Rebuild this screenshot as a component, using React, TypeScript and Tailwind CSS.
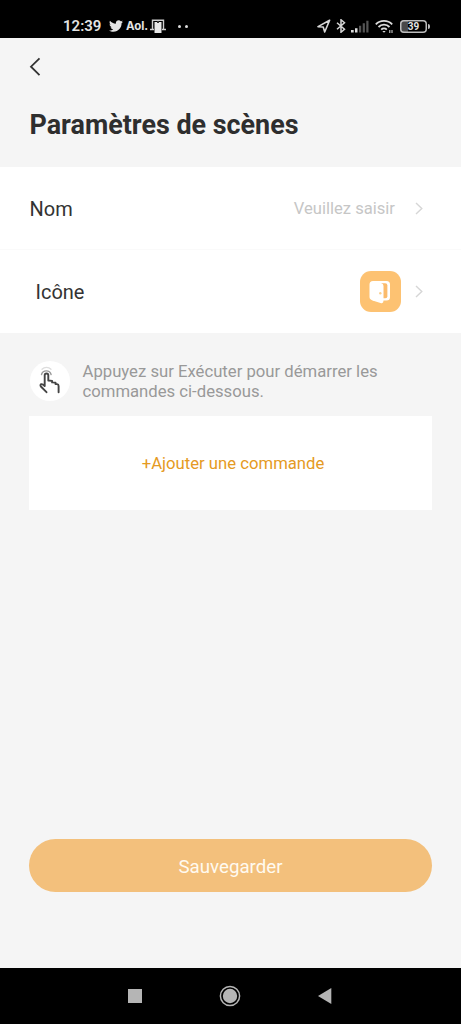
import type { ReactNode } from "react";
import { FaTwitter } from "react-icons/fa";

function StatusBar() {
  return (
    <div className="flex h-[38px] shrink-0 items-center bg-black pt-[14px] pr-[31px] pl-[63px] text-[#e4e4e4]">
      <span className="w-[39px] text-[15px] leading-6 font-semibold whitespace-nowrap">12:39</span>
      <FaTwitter className="ml-[7px] size-[14px] shrink-0" />
      <span className="ml-[3px] w-[23px] font-[Inter] text-[11.5px] leading-6 font-bold tracking-[-0.1px] whitespace-nowrap">
        Aol.
      </span>
      <svg className="ml-[1px] shrink-0" width="16" height="15" viewBox="0 0 16 15" fill="none">
        <path d="M2.5 10V1.2h11V10M0 10.500h4M12 10.500h4" stroke="#cfcfcf" strokeWidth="1.4" />
        <path d="M4.500 3h7v11h-7z" fill="#e8e8e8" />
        <path d="M7 2h2v2H7z" fill="#333" />
      </svg>
      <span className="ml-[12px] flex gap-[4px]">
        <i className="size-[3px] rounded-full bg-[#dcdcdc]" />
        <i className="size-[3px] rounded-full bg-[#dcdcdc]" />
      </span>

      <div className="ml-auto flex items-center">
        <svg width="14" height="14" viewBox="0 0 14 14" fill="none" stroke="#d6d6d6" strokeWidth="1.6" strokeLinejoin="round">
          <path d="M12.600 1.300 1 7.600l5.200.4 1.500 5z" />
        </svg>
        <svg className="ml-[5px]" width="10" height="14" viewBox="0 0 10 14" fill="none" stroke="#d6d6d6" strokeWidth="1.5">
          <path d="m1 3.800 7.500 6.400L5 13.200V.8l3.500 3L1 10.200" />
        </svg>
        <svg className="ml-[5px]" width="19" height="13" viewBox="0 0 19 13">
          <path d="M0 10h2.700v2.500H0zM4 8.200h2.500v4.300H4z" fill="#dedede" />
          <path d="M8 5.700h2.200v6.800H8zM11.700 3.200h2.200v9.300h-2.200zM15.300.8h2.200v11.700h-2.200z" fill="#555" />
        </svg>
        <svg className="ml-[5px]" width="19" height="15" viewBox="0 0 19 15" fill="none" stroke="#dcdcdc" strokeWidth="1.8">
          <path d="M.8 5.300a11.500 11.500 0 0 1 16.400 0M3.500 8a7.700 7.700 0 0 1 11 0M6.200 10.600a4 4 0 0 1 5.600 0" />
          <path d="M7.300 12 9 13.800l1.700-1.800z" fill="#dcdcdc" stroke="none" />
          <path d="M14.800 11v3M17 11v3" strokeWidth="1" />
        </svg>
        <div className="ml-[6px] flex h-[13px] w-[27px] items-center justify-center rounded-[4px] bg-linear-to-r from-[#484848] from-30% to-black to-30% pt-px text-[10px] leading-none font-bold ring-[1.500px] ring-[#bdbdbd] ring-inset">
          39
        </div>
        <i className="ml-px h-[5px] w-[2px] rounded-r bg-[#bdbdbd]" />
      </div>
    </div>
  );
}

function RowChevron() {
  return (
    <svg width="8" height="13" viewBox="0 0 8 13" fill="none" stroke="#d6d6d6" strokeWidth="1.400">
      <path d="m1 1 5.800 5.500L1 12" />
    </svg>
  );
}

function SettingRow({ label, children }: { label: ReactNode; children: ReactNode }) {
  return (
    <div className="flex h-[83px] items-center bg-white pr-[38px] pl-[29.500px] text-[20px] text-[#333]">
      {label}
      <div className="ml-auto flex items-center">
        {children}
        <RowChevron />
      </div>
    </div>
  );
}

function DoorIcon() {
  return (
    <div className="mr-[14px] size-[41px] rounded-[11px] bg-[#fdc272]">
      <svg width="41" height="41" viewBox="0 0 41 41">
        <path d="M13 10h13.500a3.500 3.500 0 0 1 3.500 3.500v12.500a3.500 3.500 0 0 1-3.500 3.500H13z" fill="#fff" />
        <path d="M19 12.200h6.200q2.200 0 2.200 2.200v10.800q0 2-2 2H22z" fill="#fbbb6c" />
        <path
          d="M13 10h3l5.500 2.300q2 .8 2 2.700v14.800q0 3.200-3 2.200l-8-2.600Q9.500 28.500 9.500 26V13.500Q9.500 10 13 10z"
          fill="#fff"
        />
        <circle cx="20.300" cy="22.300" r="1.200" fill="#fbd08f" />
      </svg>
    </div>
  );
}

function TapIcon() {
  return (
    <div className="size-[40px] shrink-0 rounded-full bg-white">
      <svg width="40" height="40" viewBox="0 0 40 40" fill="none" strokeLinejoin="round" strokeLinecap="round">
        <path d="M12 8.300a6.200 6.200 0 0 1 9 0" stroke="#ddd" strokeWidth="1.300" />
        <path d="M11.500 13.500a5 5 0 0 1 9.600 0" stroke="#999" strokeWidth="1.400" />
        <path
          d="m16.500 31.200-5.600-5.700q-1-1.600.3-2.300 1.200-.5 3.500 1.800V14.300a1.800 1.800 0 0 1 3.600 0v5.200l3.800.4v1.500l3.400.2v1.500h1.500q1.600.2 1.600 1.800v6.400"
          stroke="#444"
          strokeWidth="1.900"
        />
      </svg>
    </div>
  );
}

function NavBar() {
  return (
    <div className="flex h-[56px] shrink-0 items-center bg-black pl-[128px]">
      <i className="size-[14px] bg-[#b5b5b5]" />
      <svg className="ml-[77px]" width="22" height="22" viewBox="0 0 22 22">
        <circle cx="11" cy="11" r="9.600" fill="none" stroke="#b5b5b5" strokeWidth="1.500" />
        <circle cx="11" cy="11" r="7.200" fill="#b5b5b5" />
      </svg>
      <svg className="ml-[77px]" width="14" height="16" viewBox="0 0 14 16">
        <path d="M13.300 0v16L0 8z" fill="#b5b5b5" />
      </svg>
    </div>
  );
}

export default function App() {
  return (
    <div className="flex h-[1024px] w-[461px] flex-col overflow-hidden bg-[#f5f5f5] font-[Roboto,sans-serif]">
      <StatusBar />
      <header className="h-[129px] shrink-0 pt-[19px] pl-[29px]">
        <svg width="12" height="19" viewBox="0 0 12 19" fill="none" stroke="#333" strokeWidth="1.800">
          <path d="M10.500 1.300 2 9.700l8.500 8.400" />
        </svg>
        <h1 className="mt-[32px] pl-[0.500px] text-[26.900px] leading-[34px] font-bold whitespace-nowrap text-[#2e2e2e]">
          Paramètres de scènes
        </h1>
      </header>

      <section className="shrink-0">
        <SettingRow label={<span>Nom</span>}>
          <span className="mr-[20px] pt-px text-[16.600px] text-[#c6c6c6]">Veuillez saisir</span>
        </SettingRow>
        <div className="-mt-px h-px bg-[#fafafa]" />
        <SettingRow label={<span className="pl-[6px]">Icône</span>}>
          <DoorIcon />
        </SettingRow>
      </section>

      <main className="flex flex-1 flex-col px-[29px] pt-[28px]">
        <div className="flex h-[40px] items-center pl-px">
          <TapIcon />
          <p className="ml-[12.500px] pt-[2px] text-[16.700px] leading-[20px] whitespace-nowrap text-[#999]">
            Appuyez sur Exécuter pour démarrer les
            <br />
            commandes ci-dessous.
          </p>
        </div>
        <button className="mt-[15px] h-[94px] bg-white pt-[2px] pl-[5px] text-[16.700px] text-[#e59a23]">
          +Ajouter une commande
        </button>
        <button className="mt-auto mb-[76px] h-[53px] rounded-full bg-[#f3c07c] pt-[3px] text-[18.700px] text-[#fffaf0]">
          Sauvegarder
        </button>
      </main>
      <NavBar />
    </div>
  );
}
